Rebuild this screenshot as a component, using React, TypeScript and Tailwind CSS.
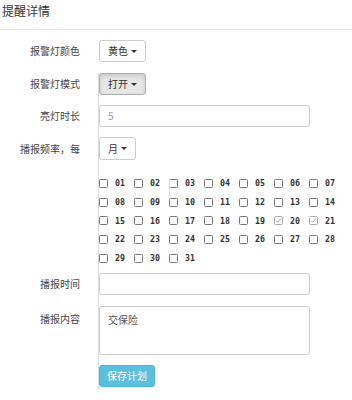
import React from "react";

const font = { fontFamily: '"Noto Sans CJK SC", "Noto Sans", sans-serif' };

function Caret() {
  return <span className="inline-block w-0 h-0 border-l-[3px] border-r-[3px] border-t-[3px] border-l-transparent border-r-transparent border-t-[#333] ml-[3px]" />;
}

function Row({ label, children, className = "" }: { label: string; children: React.ReactNode; className?: string }) {
  return (
    <div className={"flex items-center " + className}>
      <div className="w-[80px] text-right text-[10px] text-[#444] leading-none shrink-0">{label}</div>
      <div className="ml-[19px] flex">{children}</div>
    </div>
  );
}

function Check({ n, checked }: { n: number; checked?: boolean }) {
  return (
    <div className="w-[35px] h-[18.7px] flex items-center">
      <svg width="9" height="9" viewBox="0 0 9 9" className="shrink-0">
        <rect x="0.5" y="0.5" width="8" height="8" rx="1" fill="white" stroke={checked ? "#aaa" : "#777"} strokeWidth="1" />
        {checked && <path d="M2 4.6 L3.7 6.3 L7 2.6" fill="none" stroke="#999" strokeWidth="0.9" />}
      </svg>
      <span
        className="ml-[7px] text-[8.3px] font-bold text-[#333] leading-none"
        style={{ fontFamily: '"DejaVu Sans Mono", monospace' }}
      >
        {String(n).padStart(2, "0")}
      </span>
    </div>
  );
}

export default function App() {
  const days = Array.from({ length: 31 }, (_, i) => i + 1);
  return (
    <div className="w-[352px] h-[400px] bg-white relative overflow-hidden flex flex-col" style={font}>
      <div className="h-[30px] shrink-0 border-b border-[#e5e5e5] pl-[2px] pt-[3px] text-[12px] text-[#333] leading-[16px]">提醒详情</div>

      <Row label="报警灯颜色" className="mt-[10px]">
        <div className="flex items-center h-[22px] px-[8px] border border-[#ccc] rounded-[3px] bg-white text-[10px] text-[#333] leading-none">
          黄色<Caret />
        </div>
      </Row>

      <Row label="报警灯模式" className="mt-[11px]">
        <div className="flex items-center h-[22px] px-[8px] border border-[#adadad] rounded-[3px] bg-[#e6e6e6] shadow-[inset_0_2px_4px_rgba(0,0,0,0.125)] text-[10px] text-[#333] leading-none">
          打开<Caret />
        </div>
      </Row>

      <Row label="亮灯时长" className="mt-[10px]">
        <div className="w-[211px] h-[22px] border border-[#ccc] rounded-[3px] flex items-center px-[8px] text-[10px] text-[#999] leading-none">5</div>
      </Row>

      <Row label="播报频率，每" className="mt-[10px]">
        <div className="flex items-center h-[23px] px-[8px] border border-[#ccc] rounded-[3px] bg-white text-[10px] text-[#333] leading-none">
          月<Caret />
        </div>
      </Row>

      <div className="ml-[99px] mt-[14px] w-[245px] flex flex-wrap">
        {days.map((d) => (
          <Check key={d} n={d} checked={d === 20 || d === 21} />
        ))}
      </div>

      <Row label="播报时间" className="mt-[6px]">
        <div className="w-[211px] h-[22px] border border-[#ccc] rounded-[3px]" />
      </Row>

      <div className="flex mt-[11px]">
        <div className="w-[80px] text-right text-[10px] text-[#444] leading-none shrink-0 pt-[8px]">播报内容</div>
        <div className="ml-[19px] w-[211px] h-[49px] border border-[#ccc] rounded-[3px] px-[8px] pt-[6px] text-[10px] text-[#555] leading-[14px]">交保险</div>
      </div>

      <div className="flex mt-[10px] ml-[99px]">
        <div className="flex items-center h-[22px] px-[7px] bg-[#5bc0de] border border-[#46b8da] rounded-[3px] text-[10px] text-white leading-none">
          保存计划
        </div>
      </div>

      <div className="absolute left-[98px] top-[73px] w-px h-[316px] bg-[#ddd]" />
      <div className="absolute left-[169px] top-[180px] w-px h-[16px] bg-[#ddd]" />
    </div>
  );
}
